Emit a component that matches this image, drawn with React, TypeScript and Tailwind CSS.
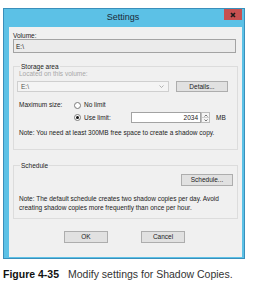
import React from 'react';

function Radio({ checked }: { checked?: boolean }) {
  return (
    <span className="w-[7px] h-[7px] rounded-full border border-[#7a7a7a] bg-white flex items-center justify-center">
      {checked && <span className="w-[3px] h-[3px] rounded-full bg-[#111]" />}
    </span>
  );
}

function WinButton({ label, className }: { label: string; className: string }) {
  return (
    <div
      className={`bg-[#e1e1e1] border border-[#adadad] flex items-center justify-center text-[6.5px] text-[#222] ${className}`}
    >
      {label}
    </div>
  );
}

export default function App() {
  return (
    <div className="w-[269px] h-[294px] bg-white font-['Liberation_Sans',Arial,sans-serif] pt-[8px] pl-[3px]">
      {/* Dialog window */}
      <div className="w-[242px] h-[251px] bg-[#5cc1e6] border border-[#3a8fbb] flex flex-col">
        {/* Title bar */}
        <div className="h-[18px] flex items-start">
          <div className="flex-1" />
          <div className="pt-[3px] text-[9px] leading-[11px] text-[#1b2a36]">Settings</div>
          <div className="flex-1 flex justify-end pr-[2px]">
            <div className="w-[18px] h-[11px] bg-[#c75050] flex items-center justify-center">
              <svg width="6" height="6" viewBox="0 0 6 6">
                <path d="M1 1 L5 5 M5 1 L1 5" stroke="#1a1a1a" strokeWidth="1.6" />
              </svg>
            </div>
          </div>
        </div>

        {/* Client area */}
        <div className="ml-[5px] mr-[2px] mb-[1px] flex-1 bg-[#f0f0f0] text-[6.5px] text-[#222] flex flex-col">
          <div className="pt-[4px] pl-[4px] leading-[9px] h-[9px]">Volume:</div>
          <div className="mt-[3px] ml-[4px] w-[223px] h-[14px] bg-[#ebebeb] border border-[#a3a3a3] flex items-center pl-[2px] leading-[9px]">
            E:\
          </div>

          {/* Storage area */}
          <fieldset className="mt-[10px] mx-[4px] border border-[#dcdcdc] px-[3px] pb-[13px]">
            <legend className="ml-[3px] px-[1px] leading-[7px] text-[6.5px]">Storage area</legend>
            <div className="pl-[2px] leading-[7px] text-[#a8a8a8]">Located on this volume:</div>
            <div className="mt-[4px] flex items-center">
              <div className="w-[152px] h-[11px] border border-[#cfcfcf] bg-[#f4f4f4] flex items-center justify-between pl-[3px] pr-[4px] text-[#555]">
                <span className="leading-[9px]">E:\</span>
                <svg width="5" height="3" viewBox="0 0 5 3">
                  <path d="M0.5 0.5 L2.5 2.5 L4.5 0.5" stroke="#a0a0a0" strokeWidth="0.8" fill="none" />
                </svg>
              </div>
              <WinButton label="Details..." className="ml-[7px] w-[52px] h-[11px]" />
            </div>

            <div className="mt-[9px] flex items-center h-[8px] pl-[2px]">
              <div className="w-[55px] leading-[8px]">Maximum size:</div>
              <Radio />
              <div className="ml-[3px] leading-[8px]">No limit</div>
            </div>
            <div className="mt-[3px] flex items-center h-[11px] pl-[2px]">
              <div className="w-[55px]" />
              <Radio checked />
              <div className="ml-[3px] w-[47px] leading-[8px]">Use limit:</div>
              <div className="w-[70px] h-[11px] bg-white border border-[#a3a3a3] flex items-center justify-end pr-[2px] leading-[9px]">
                2034
              </div>
              <div className="w-[9px] h-[11px] border border-[#bcbcbc] bg-[#f4f4f4] flex flex-col">
                <div className="flex-1 flex items-center justify-center border-b border-[#d0d0d0]">
                  <svg width="4" height="3" viewBox="0 0 4 3">
                    <path d="M0.5 2.5 L2 1 L3.5 2.5" stroke="#555" strokeWidth="0.8" fill="none" />
                  </svg>
                </div>
                <div className="flex-1 flex items-center justify-center">
                  <svg width="4" height="3" viewBox="0 0 4 3">
                    <path d="M0.5 0.5 L2 2 L3.5 0.5" stroke="#555" strokeWidth="0.8" fill="none" />
                  </svg>
                </div>
              </div>
              <div className="ml-[6px] leading-[8px]">MB</div>
            </div>
            <div className="mt-[6px] pl-[2px] leading-[7px]">
              Note: You need at least 300MB free space to create a shadow copy.
            </div>
          </fieldset>

          {/* Schedule */}
          <fieldset className="mt-[12px] mx-[4px] border border-[#dcdcdc] px-[3px] pb-[6px]">
            <legend className="ml-[3px] px-[1px] leading-[7px] text-[6.5px]">Schedule</legend>
            <div className="mt-[5px] flex justify-end pr-[1px]">
              <WinButton label="Schedule..." className="w-[52px] h-[12px]" />
            </div>
            <div className="mt-[8px] pl-[2px] leading-[9px]">
              Note: The default schedule creates two shadow copies per day. Avoid
              <br />
              creating shadow copies more frequently than once per hour.
            </div>
          </fieldset>

          <div className="mt-[12px] flex justify-center gap-[33px] pr-[2px]">
            <WinButton label="OK" className="w-[44px] h-[12px]" />
            <WinButton label="Cancel" className="w-[44px] h-[12px]" />
          </div>
        </div>
      </div>

      {/* Caption */}
      <div className="mt-[9px] text-[10.5px] leading-[12px] flex">
        <span className="font-bold text-[#111]">Figure 4-35</span>
        <span className="ml-[9px] text-[#333]">Modify settings for Shadow Copies.</span>
      </div>
    </div>
  );
}
